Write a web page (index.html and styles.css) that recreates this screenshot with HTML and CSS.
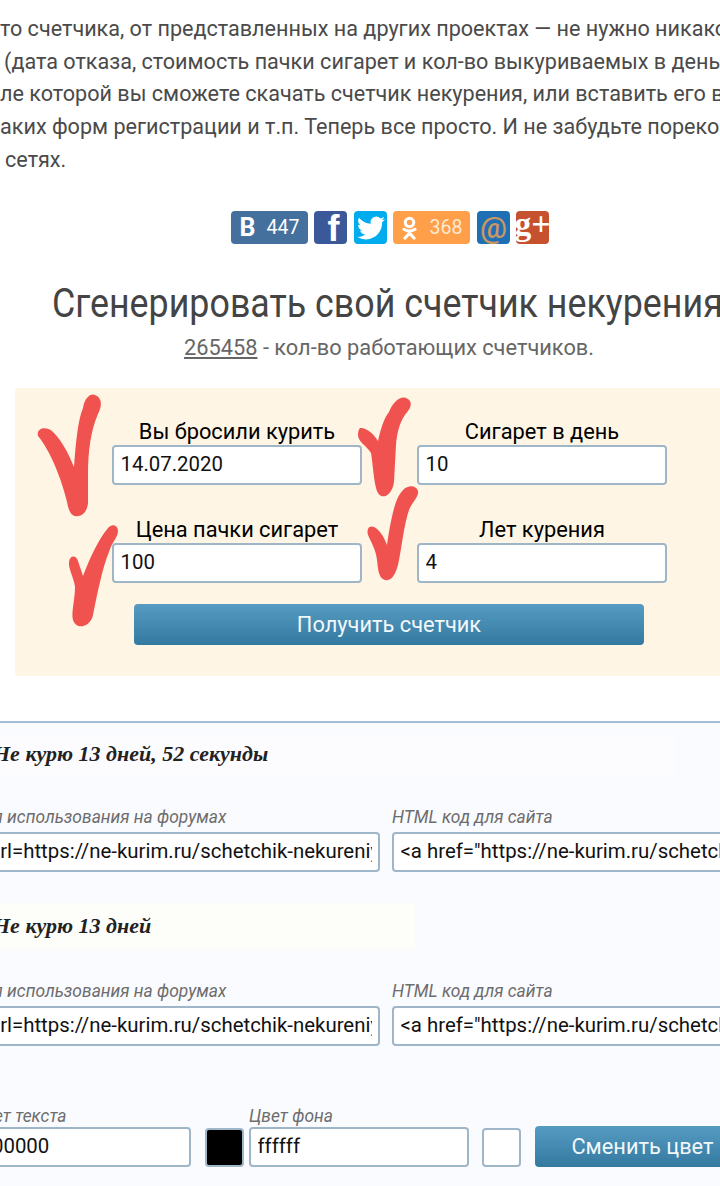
FILE: index.html
```html
<!DOCTYPE html>
<html lang="en">
<head>
    <meta charset="UTF-8">
    <meta name="viewport" content="width=device-width, initial-scale=1.0">
    <title>Счетчик некурения</title>
    <link rel="stylesheet" href="styles.css">
</head>
<body>
    <div class="article">
        <p class="line line1">то счетчика, от представленных на других проектах — не нужно никакой</p>
        <p class="line line2">(дата отказа, стоимость пачки сигарет и кол-во выкуриваемых в день</p>
        <p class="line line3">ле которой вы сможете скачать счетчик некурения, или вставить его в</p>
        <p class="line line4">аких форм регистрации и т.п. Теперь все просто. И не забудьте пореком</p>
        <p class="line line5">сетях.</p>
    </div>

    <div class="share">
        <a class="share-btn vk"><span class="vk-logo">В</span><span class="count">447</span></a>
        <a class="share-btn square fb"><span class="fb-logo">f</span></a>
        <a class="share-btn square tw">
            <svg viewBox="0 0 24 24" width="28" height="28"><path fill="#fff" d="M23.953 4.57a10 10 0 01-2.825.775 4.958 4.958 0 002.163-2.723c-.951.555-2.005.959-3.127 1.184a4.92 4.92 0 00-8.384 4.482C7.69 8.095 4.067 6.13 1.64 3.162a4.822 4.822 0 00-.666 2.475c0 1.71.87 3.213 2.188 4.096a4.904 4.904 0 01-2.228-.616v.06a4.923 4.923 0 003.946 4.827 4.996 4.996 0 01-2.212.085 4.936 4.936 0 004.604 3.417 9.867 9.867 0 01-6.102 2.105c-.39 0-.779-.023-1.17-.067a13.995 13.995 0 007.557 2.209c9.053 0 13.998-7.496 13.998-13.985 0-.21 0-.42-.015-.63A9.935 9.935 0 0024 4.59z"/></svg>
        </a>
        <a class="share-btn ok">
            <svg viewBox="0 0 20 28" width="17" height="24"><circle cx="10" cy="7.5" r="5" fill="none" stroke="#fff" stroke-width="3.6"/><path d="M3.5 15.5c4 2.6 9 2.6 13 0M10 17.5v2M4.5 26l5.5-6 5.5 6" fill="none" stroke="#fff" stroke-width="3.6" stroke-linecap="round"/></svg>
            <span class="count">368</span>
        </a>
        <a class="share-btn square mail"><span class="mail-logo">@</span></a>
        <a class="share-btn square gplus"><span class="gplus-logo">g+</span></a>
    </div>

    <h2 class="title">Сгенерировать свой счетчик некурения</h2>
    <p class="subtitle"><u>265458</u> - кол-во работающих счетчиков.</p>

    <form class="panel">
        <svg class="marks" viewBox="0 388 720 288" width="720" height="288">
            <path d="M38 436C36 428 46 426 52 431C60 438 68 452 74 467C76 440 78 420 83 408C85 396 92 392 97 396C103 400 101 408 98 414C91 430 88 450 88 475L88 503C87 514 80 517 75 516C70 515 68 508 67 502C62 480 50 450 38 436Z"/>
            <path d="M108 528C112 523 118 525 118 531C118 537 112 542 109 552C103 566 98 590 93 615C90 628 76 630 73 620C71 612 75 600 75 587C74 578 68 568 69 562C70 555 76 555 78 561L83 576C90 558 98 540 108 528Z"/>
            <path d="M360 428C366 427 374 434 378 441C381 428 384 418 389 412C393 402 400 396 406 398C412 400 412 406 408 411C400 420 397 432 396 445L394 482C392 496 382 500 378 493C374 486 373 465 371 453C367 446 358 442 358 435C358 431 359 429 360 428Z"/>
            <path d="M403 490C408 485 416 485 418 491C419 497 412 502 409 510C404 525 402 545 399 560C397 572 392 582 385 580C378 578 378 568 377 560C376 550 371 542 368 535C366 528 370 525 374 527C380 530 384 537 387 545C389 530 392 515 395 505C397 498 400 493 403 490Z"/>
        </svg>
        <div class="grid">
            <label class="field"><span>Вы бросили курить</span><input type="text" value="14.07.2020"></label>
            <label class="field"><span>Сигарет в день</span><input type="text" value="10"></label>
            <label class="field"><span>Цена пачки сигарет</span><input type="text" value="100"></label>
            <label class="field"><span>Лет курения</span><input type="text" value="4"></label>
        </div>
        <button type="button" class="btn get-btn">Получить счетчик</button>
    </form>

    <div class="result">
        <div class="counter wide">Не курю 13 дней, 52 секунды</div>
        <div class="codes">
            <label class="code"><span>Для использования на форумах</span><input type="text" value="[url=https://ne-kurim.ru/schetchik-nekureniya/"></label>
            <label class="code"><span>HTML код для сайта</span><input type="text" value='&lt;a href="https://ne-kurim.ru/schetchik-nekureniya/'></label>
        </div>
        <div class="counter short">Не курю 13 дней</div>
        <div class="codes">
            <label class="code"><span>Для использования на форумах</span><input type="text" value="[url=https://ne-kurim.ru/schetchik-nekureniya/"></label>
            <label class="code"><span>HTML код для сайта</span><input type="text" value='&lt;a href="https://ne-kurim.ru/schetchik-nekureniya/'></label>
        </div>
        <div class="colors">
            <label class="code color-text"><span>Цвет текста</span><input type="text" value="000000"></label>
            <div class="swatch black"></div>
            <label class="code color-bg"><span>Цвет фона</span><input type="text" value="ffffff"></label>
            <div class="swatch"></div>
            <button type="button" class="btn color-btn">Сменить цвет</button>
        </div>
    </div>
</body>
</html>
```

FILE: styles.css
```css
html, body {
    height: 100%;
}
body {
    margin: 0;
    width: 720px;
    height: 1186px;
    overflow: hidden;
    background: #fff;
    font-family: Roboto, "Noto Sans", sans-serif;
    color: #000;
}
.article {
    padding-top: 13px;
    color: #4a4a4a;
    font-size: 21.6px;
}
.line {
    margin: 0;
    height: 32.7px;
    line-height: 32.7px;
    white-space: nowrap;
}
.line2 { padding-left: 4px; }
.line5 { padding-left: 5px; }

.share {
    display: flex;
    gap: 6px;
    margin: 35px 0 0 231px;
    height: 33px;
}
.share-btn {
    display: flex;
    align-items: center;
    justify-content: center;
    height: 33px;
    width: 77px;
    border-radius: 4px;
    color: #fff;
    overflow: hidden;
}
.share-btn.square {
    width: 33px;
}
.count {
    font-size: 19.5px;
}
.vk { background: #44709d; gap: 11px; }
.vk-logo { font-weight: 700; font-size: 25px; }
.fb { background: #3b5998; align-items: flex-end; }
.fb-logo { font-family: "Liberation Sans", sans-serif; font-weight: 700; font-size: 36px; line-height: 31px; margin-left: 6px; }
.tw { background: #00aced; margin-left: 1px; }
.ok { background: #ff9f4a; gap: 12px; }
.ok .count { color: #fde9d4; }
.mail { background: #1f6fb4; margin-left: 1px; }
.mail-logo { color: #c99762; font-size: 30px; font-weight: 500; line-height: 33px; }
.gplus { background: #c5512f; align-items: flex-start; }
.gplus-logo { font-family: "Liberation Serif", serif; font-weight: 700; font-size: 34px; line-height: 26px; }

.title {
    margin: 36px 0 0 52px;
    font-size: 40px;
    line-height: 48px;
    font-weight: 400;
    color: #444;
    white-space: nowrap;
    transform: scaleX(.895);
    transform-origin: left center;
}
.subtitle {
    margin: 6px 0 0;
    text-align: center;
    padding-left: 58px;
    font-size: 21.8px;
    line-height: 28px;
    color: #666;
}

.panel {
    position: relative;
    box-sizing: border-box;
    width: 720px;
    height: 288px;
    margin: 26px 0 0 15px;
    padding: 30px 0 0 97px;
    background: #fff5e5;
    border-radius: 4px;
}
.marks {
    position: absolute;
    left: -15px;
    top: 0;
    z-index: 2;
}
.marks path {
    fill: #f0534f;
}
.grid {
    display: grid;
    grid-template-columns: 250px 250px;
    column-gap: 55px;
    row-gap: 31px;
}
.field {
    display: block;
    text-align: center;
    font-size: 21.8px;
    line-height: 27px;
}
.field span {
    display: block;
}
input {
    display: block;
    box-sizing: border-box;
    width: 100%;
    height: 40px;
    padding: 0 6.5px 2px;
    border: 2px solid #9fb5c8;
    border-radius: 4px;
    background: #fff;
    font-family: inherit;
    font-size: 20.4px;
    color: #111;
    outline: none;
}
.btn {
    display: block;
    height: 41px;
    border: 0;
    border-radius: 4px;
    background: linear-gradient(#569bc2, #34799f);
    color: #f2f7fa;
    font-family: inherit;
    font-size: 21.8px;
}
.get-btn {
    width: 510px;
    margin: 21px 0 0 22px;
}

.result {
    height: 465px;
    margin-top: 45px;
    padding-top: 12px;
    border-top: 2px solid #a3bdd3;
    background: #fafbff;
    box-sizing: border-box;
}
.counter {
    box-sizing: border-box;
    height: 40px;
    margin-left: -22px;
    padding-left: 15px;
    font-family: "Liberation Serif", serif;
    font-style: italic;
    font-weight: 700;
    font-size: 22px;
    line-height: 38px;
    color: #222;
    white-space: nowrap;
}
.counter.wide { width: 697px; background: #fcfcff; }
.counter.short { width: 437px; height: 46px; line-height: 46px; margin-top: 31px; background: #fdfefa; }
.codes {
    display: flex;
    gap: 12px;
    margin: 28px 0 0 -25px;
}
.code {
    display: block;
    flex: none;
    width: 405px;
    font-style: italic;
    font-size: 17.4px;
    line-height: 29px;
    color: #6d6d6d;
}
.code span {
    display: block;
}
.codes .code:first-child span {
    margin-left: -4px;
}
.code input {
    font-style: normal;
}
.colors {
    display: flex;
    align-items: flex-end;
    margin: 59px 0 0 -28px;
}
.colors .code {
    line-height: 22px;
}
.color-text { width: 219px; }
.color-bg { width: 220px; margin-left: 5px; }
.swatch {
    flex: none;
    box-sizing: border-box;
    width: 39px;
    height: 39px;
    margin-left: 14px;
    border: 2px solid #9fb5c8;
    border-radius: 4px;
    background: #fff;
}
.swatch.black {
    background: #000;
}
.color-bg + .swatch {
    margin-left: 13px;
}
.color-btn {
    flex: none;
    width: 215px;
    margin-left: 14px;
}
```
